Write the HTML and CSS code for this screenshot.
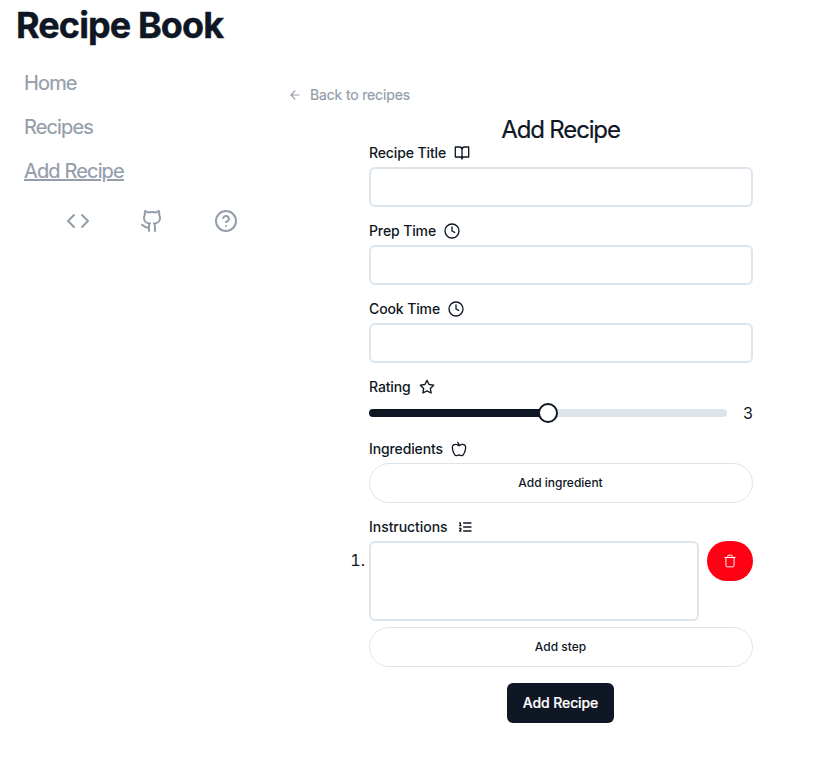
FILE: index.html
```html
<!DOCTYPE html>
<html lang="en">
<head>
<meta charset="utf-8">
<title>Recipe Book</title>
<link rel="stylesheet" href="styles.css">
</head>
<body>
<h1 class="brand">Recipe Book</h1>
<div class="layout">
  <nav class="sidebar">
    <a class="nav-link">Home</a>
    <a class="nav-link">Recipes</a>
    <a class="nav-link active">Add Recipe</a>
    <div class="nav-icons">
      <svg class="icon large" viewBox="0 0 24 24"><path d="m16 18 6-6-6-6M8 6l-6 6 6 6"/></svg>
      <svg class="icon large" viewBox="0 0 24 24"><path d="M15 22v-4a4.8 4.8 0 0 0-1-3.5c3 0 6-2 6-5.5.08-1.25-.27-2.48-1-3.5.28-1.15.28-2.35 0-3.5 0 0-1 0-3 1.5-2.64-.5-5.36-.5-8 0C6 2 5 2 5 2c-.3 1.15-.3 2.35 0 3.5A5.403 5.403 0 0 0 4 9c0 3.5 3 5.5 6 5.5-.39.49-.68 1.05-.85 1.65-.17.6-.22 1.23-.15 1.85v4"/><path d="M9 18c-4.51 2-5-2-7-2"/></svg>
      <svg class="icon large" viewBox="0 0 24 24"><circle cx="12" cy="12" r="10"/><path d="M9.09 9a3 3 0 0 1 5.83 1c0 2-3 3-3 3M12 17h.01"/></svg>
    </div>
  </nav>
  <main class="content">
    <a class="back"><svg class="icon arrow" viewBox="0 0 24 24"><path d="m12 19-7-7 7-7M19 12H5"/></svg><span>Back to recipes</span></a>
    <form class="form">
      <h2 class="title">Add Recipe</h2>
      <div class="field">
        <label class="label">Recipe Title <svg class="icon" viewBox="0 0 24 24"><path d="M2 3h6a4 4 0 0 1 4 4v14a3 3 0 0 0-3-3H2zM22 3h-6a4 4 0 0 0-4 4v14a3 3 0 0 1 3-3h7z"/></svg></label>
        <input class="input">
      </div>
      <div class="field">
        <label class="label">Prep Time <svg class="icon" viewBox="0 0 24 24"><circle cx="12" cy="12" r="10.5"/><path d="M12 6v6l4 2"/></svg></label>
        <input class="input">
      </div>
      <div class="field">
        <label class="label">Cook Time <svg class="icon" viewBox="0 0 24 24"><circle cx="12" cy="12" r="10.5"/><path d="M12 6v6l4 2"/></svg></label>
        <input class="input">
      </div>
      <div class="field">
        <label class="label">Rating <svg class="icon" viewBox="0 0 24 24"><path d="m12 2 3.09 6.26L22 9.27l-5 4.87 1.18 6.88L12 17.77l-6.18 3.25L7 14.14 2 9.27l6.91-1.01z"/></svg></label>
        <div class="rating">
          <div class="slider"><div class="filled"></div><div class="thumb"></div></div>
          <span>3</span>
        </div>
      </div>
      <div class="field">
        <label class="label">Ingredients <svg class="icon" viewBox="0 0 24 24"><path d="M12 20.94c1.5 0 2.75 1.06 4 1.06 3 0 6-8 6-12.22A4.91 4.91 0 0 0 17 5c-2.22 0-4 1.44-5 2-1-.56-2.78-2-5-2a4.9 4.9 0 0 0-5 4.78C2 14 5 22 8 22c1.25 0 2.5-1.06 4-1.06Z"/><path d="M10 2c1 .5 2 2 2 5"/></svg></label>
        <button type="button" class="pill">Add ingredient</button>
      </div>
      <div class="field">
        <label class="label wide">Instructions <svg class="icon" viewBox="0 0 24 24"><path d="M10 6h11M10 12h11M10 18h11M4 6h1v4M4 10h2M6 18H4c0-1 2-2 2-3s-1-1.500-2-1"/></svg></label>
        <ol class="steps">
          <li class="step">
            <textarea class="input area"></textarea>
            <button type="button" class="delete"><svg class="trash" viewBox="0 0 24 24"><path d="M2.500 6h19M19 6v14a2 2 0 0 1-2 2H7a2 2 0 0 1-2-2V6M8 6V4a2 2 0 0 1 2-2h4a2 2 0 0 1 2 2v2"/></svg></button>
          </li>
        </ol>
        <button type="button" class="pill">Add step</button>
      </div>
      <button type="button" class="submit">Add Recipe</button>
    </form>
  </main>
</div>
</body>
</html>
```
FILE: styles.css
```css
* { box-sizing: border-box; margin: 0; padding: 0; }
body { font: 16px/24px Inter, sans-serif; color: #0f1724; background: #fff; }
.brand { padding: 5px 16px 0; font-size: 36px; line-height: 40px; font-weight: 700; letter-spacing: -0.9px; -webkit-text-stroke: 0.4px currentColor; }
.layout { display: flex; }
.sidebar { width: 287px; padding: 24px 24px 0; display: flex; flex-direction: column; gap: 16px; color: #949daa; }
.nav-link { align-self: flex-start; font-size: 20px; line-height: 28px; letter-spacing: -0.85px; -webkit-text-stroke: 0.2px currentColor; }
.active { text-decoration: underline; }
.nav-icons { display: flex; gap: 50px; padding: 8px 0 0 42px; }
.icon { width: 16px; height: 16px; flex: none; fill: none; stroke: currentColor; stroke-width: 2; stroke-linecap: round; stroke-linejoin: round; }
.large { width: 24px; height: 24px; }
.content { padding-top: 40px; }
.back { display: flex; align-items: center; gap: 7px; height: 20px; font-size: 14px; line-height: 20px; letter-spacing: -0.15px; color: #949daa; -webkit-text-stroke: 0.2px currentColor; }
.arrow { width: 16px; height: 14px; }
.form { width: 384px; margin: 8px 0 0 82px; display: flex; flex-direction: column; align-items: center; gap: 16px; }
.title { padding-top: 1px; height: 32px; font-size: 24px; line-height: 32px; font-weight: 400; letter-spacing: -1.15px; margin: 0 1px -16px 0; -webkit-text-stroke: 0.2px currentColor; }
.field { width: 100%; display: flex; flex-direction: column; gap: 6px; }
.label { display: flex; align-items: center; gap: 8px; height: 16px; font-size: 14px; line-height: 16px; font-weight: 500; letter-spacing: -0.12px; }
.wide { gap: 9px; letter-spacing: -0.05px; }
.input { display: block; width: 100%; height: 40px; border: 2px solid #dce5ec; border-radius: 6px; background: #fff; outline: none; resize: none; }
.rating { display: flex; align-items: center; gap: 16px; height: 24px; }
.rating span { width: 10px; }
.slider { flex: 1; height: 8px; position: relative; border-radius: 4px; background: #dce5ec; }
.filled { width: 50%; height: 8px; border-radius: 4px 0 0 4px; background: #0f1724; }
.thumb { position: absolute; left: calc(50% - 10px); top: -6px; width: 20px; height: 20px; border: 2px solid #0f1724; border-radius: 50%; background: #fff; }
.pill { height: 40px; width: 100%; padding-right: 1px; border: 1px solid #dce5ec; border-radius: 20px; background: #fff; color: inherit; font: 500 12px/16px Inter, sans-serif; }
.steps { list-style: none; counter-reset: step; }
.step { display: flex; align-items: flex-start; gap: 8px; margin-left: -24px; counter-increment: step; }
.step::before { content: counter(step) "."; width: 20px; margin-right: -4px; padding-top: 7px; text-align: right; font-variant-numeric: tabular-nums; }
.area { width: 330px; height: 80px; }
.delete { width: 46px; height: 40px; border: 0; border-radius: 20px; background: #ff0015; color: #fff; display: flex; align-items: center; justify-content: center; }
.trash { width: 14px; height: 14px; fill: none; stroke: currentColor; stroke-width: 1.7; }
.submit { width: 107px; height: 40px; margin-right: 1px; border: 0; border-radius: 6px; background: #0f1724; color: #fff; font: 500 14px/20px Inter, sans-serif; letter-spacing: -0.1px; -webkit-text-stroke: 0.2px currentColor; }
```
